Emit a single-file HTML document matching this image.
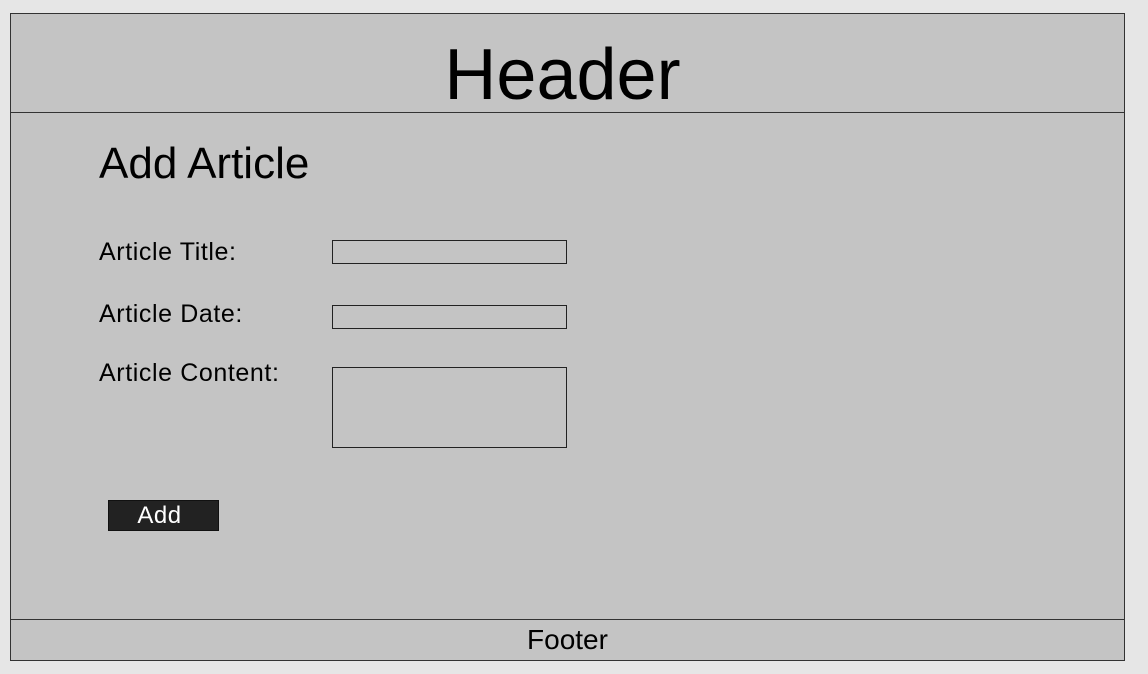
<!DOCTYPE html>
<html><head><meta charset="utf-8"><style>
html,body{margin:0;padding:0;}
body{width:1148px;height:674px;background:#e6e6e6;position:relative;overflow:hidden;font-family:"Liberation Sans",sans-serif;color:#000;}
.box{position:absolute;left:10px;top:13px;width:1113px;height:646px;border:1px solid #333;background:#c4c4c4;}
.hl{position:absolute;left:10px;width:1115px;height:1px;background:#333;}
.t{position:absolute;white-space:nowrap;}
.lb{font-size:25px;line-height:28px;letter-spacing:0.6px;}
.in{position:absolute;border:1px solid #222;background:#c4c4c4;box-sizing:border-box;}
</style></head><body>
<div class="box"></div>
<div class="hl" style="top:112px"></div>
<div class="hl" style="top:619px"></div>
<div class="t" style="left:0;width:1125px;text-align:center;top:32px;font-size:72px;line-height:86px;">Header</div>
<div class="t" style="left:99px;top:139px;font-size:44px;line-height:50px;">Add Article</div>
<div class="t lb" style="left:99px;top:238px;">Article Title:</div>
<div class="t lb" style="left:99px;top:300px;">Article Date:</div>
<div class="t lb" style="left:99px;top:359px;">Article Content:</div>
<div class="in" style="left:332px;top:240px;width:235px;height:24px;"></div>
<div class="in" style="left:332px;top:305px;width:235px;height:24px;"></div>
<div class="in" style="left:332px;top:367px;width:235px;height:81px;"></div>
<div style="position:absolute;left:108px;top:500px;width:111px;height:31px;background:#222;border:1px solid #111;box-sizing:border-box;color:#fff;font-size:24px;line-height:29px;text-align:center;letter-spacing:0.5px;"><span style="position:relative;left:-4px">Add</span></div>
<div class="t" style="left:0;width:1135px;text-align:center;top:623px;font-size:28px;line-height:34px;">Footer</div>
</body></html>
